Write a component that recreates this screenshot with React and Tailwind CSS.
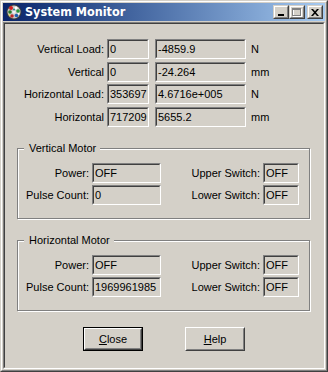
import React from 'react';

function Field({ w, children }) {
  return (
    <div className={`h-[20px] ${w} shrink-0 border border-t-[#808080] border-l-[#808080] border-b-white border-r-white`}>
      <div className="h-full border border-t-[#404040] border-l-[#404040] border-b-[#d4d0c8] border-r-[#d4d0c8] pl-[1px] leading-[16px] whitespace-nowrap overflow-hidden">
        {children}
      </div>
    </div>
  );
}

function ReadRow({ label, a, b, unit, className }) {
  return (
    <div className={`flex items-center ${className}`}>
      <div className="w-[99px] text-right whitespace-nowrap">{label}</div>
      <div className="ml-[3px]"><Field w="w-[42px]">{a}</Field></div>
      <div className="ml-[6px]"><Field w="w-[91px]">{b}</Field></div>
      <div className="ml-[5px]">{unit}</div>
    </div>
  );
}

function MotorGroup({ title, pulse, className }) {
  const rows = [
    ['Power:', 'OFF', 'Upper Switch:', 'OFF'],
    ['Pulse Count:', pulse, 'Lower Switch:', 'OFF'],
  ];
  return (
    <div className={`relative ml-[12px] w-[293px] h-[71px] border border-[#808080] shadow-[inset_1px_1px_0_#ffffff,1px_1px_0_#ffffff] pt-[14px] ${className}`}>
      <div className="absolute -top-[7px] left-[6px] pl-[5px] pr-[4px] bg-[#d4d0c8] leading-[13px]">{title}</div>
      <div className="flex flex-col gap-[2px]">
        {rows.map((r) => (
          <div key={r[0]} className="flex items-center">
            <div className="w-[71px] text-right whitespace-nowrap">{r[0]}</div>
            <div className="ml-[3px]"><Field w="w-[69px]">{r[1]}</Field></div>
            <div className="flex-1 text-right whitespace-nowrap">{r[2]}</div>
            <div className="ml-[3px] mr-[10px]"><Field w="w-[36px]">{r[3]}</Field></div>
          </div>
        ))}
      </div>
    </div>
  );
}

function CapButton({ children, className }) {
  return (
    <div className={`w-[16px] h-[14px] border border-t-[#d4d0c8] border-l-[#d4d0c8] border-r-[#404040] border-b-[#404040] ${className}`}>
      <div className="w-full h-full bg-[#d4d0c8] border border-t-white border-l-white border-r-[#808080] border-b-[#808080] flex items-center justify-center">
        {children}
      </div>
    </div>
  );
}

function AppIcon() {
  return (
    <svg width="16" height="16" viewBox="0 0 16 16" className="shrink-0">
      <circle cx="8" cy="8" r="7.5" fill="#3a3a3a" />
      <circle cx="8" cy="8" r="6.5" fill="#c8c8c8" />
      <circle cx="5" cy="4" r="2" fill="#d02020" />
      <circle cx="10" cy="4" r="1.6" fill="#ffffff" />
      <circle cx="12" cy="7" r="1.8" fill="#2a9a3a" />
      <circle cx="4" cy="8" r="1.8" fill="#2a7a2a" />
      <circle cx="8" cy="8" r="1.7" fill="#f0f0f0" />
      <circle cx="6" cy="12" r="1.8" fill="#c02828" />
      <circle cx="10.5" cy="11.5" r="1.8" fill="#1e5fb0" />
      <circle cx="8" cy="5.5" r="1" fill="#1c8a8a" />
      <circle cx="3.5" cy="11" r="0.9" fill="#e8e060" />
      <circle cx="12.5" cy="9.8" r="0.9" fill="#ffffff" />
    </svg>
  );
}

function Button({ children, isDefault }) {
  const inner = (
    <div className="w-full h-full border border-t-white border-l-white border-r-[#404040] border-b-[#404040]">
      <div className="w-full h-full border border-t-[#d4d0c8] border-l-[#d4d0c8] border-r-[#808080] border-b-[#808080] flex items-center justify-center">
        {children}
      </div>
    </div>
  );
  return (
    <div className={`w-[60px] h-[24px] ${isDefault ? 'border border-black' : ''}`}>{inner}</div>
  );
}

export default function App() {
  return (
    <div className="w-[328px] h-[372px] bg-[#d4d0c8] border border-t-[#d4d0c8] border-l-[#d4d0c8] border-r-[#404040] border-b-[#404040] font-['Liberation_Sans',Arial,sans-serif] text-[11px] text-black">
      <div className="h-full border border-t-white border-l-white border-r-[#808080] border-b-[#808080] p-[1px] flex flex-col">
        <div className="h-[18px] shrink-0 flex items-center bg-gradient-to-r from-[#0a246a] to-[#a6caf0] pl-[3px] pr-[2px]">
          <AppIcon />
          <div className="ml-[3px] text-white font-bold text-[12.5px] font-['DejaVu_Sans_Condensed','DejaVu_Sans',sans-serif] leading-[16px] whitespace-nowrap">
            System Monitor
          </div>
          <div className="flex-1" />
          <CapButton>
            <div className="w-[6px] h-[2px] bg-black mt-[5px] -ml-[1px]" />
          </CapButton>
          <CapButton>
            <svg width="10" height="9" viewBox="0 0 10 9">
              <rect x="1.5" y="1.5" width="8" height="7" fill="none" stroke="#ffffff" />
              <rect x="0.5" y="0.5" width="8" height="7" fill="none" stroke="#808080" />
              <line x1="0" y1="1.5" x2="9" y2="1.5" stroke="#808080" />
            </svg>
          </CapButton>
          <CapButton className="ml-[2px]">
            <svg width="8" height="7" viewBox="0 0 8 7">
              <path d="M0 0h2l2 2.2L6 0h2L5 3.5 8 7H6L4 4.8 2 7H0l3-3.5z" fill="#000" />
            </svg>
          </CapButton>
        </div>
        <div className="mt-[1px] flex-1 border border-t-[#808080] border-l-[#808080] border-r-white border-b-white">
          <div className="h-full border border-t-[#404040] border-l-[#404040] border-r-[#d4d0c8] border-b-[#d4d0c8] flex flex-col pt-[15px]">
            <ReadRow label="Vertical Load:" a="0" b="-4859.9" unit="N" />
            <ReadRow label="Vertical" a="0" b="-24.264" unit="mm" className="mt-[3px]" />
            <ReadRow label="Horizontal Load:" a="353697" b="4.6716e+005" unit="N" className="mt-[2px]" />
            <ReadRow label="Horizontal" a="717209" b="5655.2" unit="mm" className="mt-[3px]" />
            <MotorGroup title="Vertical Motor" pulse="0" className="mt-[21px]" />
            <MotorGroup title="Horizontal Motor" pulse="1969961985" className="mt-[21px]" />
            <div className="mt-[16px] flex justify-center gap-[42px]">
              <Button isDefault><span><span className="underline">C</span>lose</span></Button>
              <Button><span><span className="underline">H</span>elp</span></Button>
            </div>
          </div>
        </div>
      </div>
    </div>
  );
}
